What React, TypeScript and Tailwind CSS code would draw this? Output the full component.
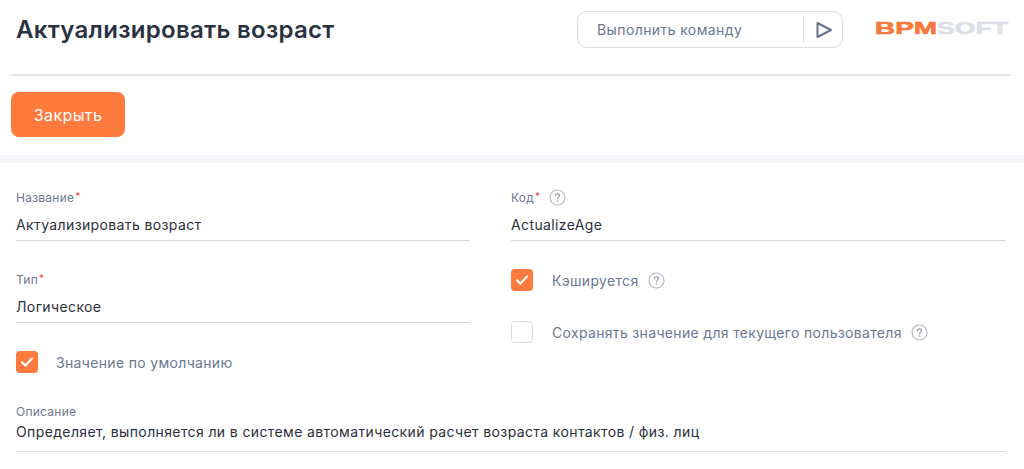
import React from "react";

const HelpIcon = () => (
    <svg width="17" height="17" viewBox="0 0 17 17" fill="none" className="shrink-0">
        <circle cx="8.5" cy="8.5" r="7.5" stroke="#b4b9c4" strokeWidth="1.2" />
        <path
            d="M6.5 6.7c0-1.1.9-1.8 2-1.8s2 .7 2 1.7c0 1.5-2 1.6-2 3.1"
            stroke="#9aa0ad"
            strokeWidth="1.2"
            strokeLinecap="round"
        />
        <circle cx="8.5" cy="12" r=".8" fill="#9aa0ad" />
    </svg>
);

const Checkbox = ({ checked = false }: { checked?: boolean }) =>
    checked ? (
        <span className="flex h-[22px] w-[22px] shrink-0 items-center justify-center rounded-[4px] bg-[#ff7a3d]">
            <svg width="14" height="12" viewBox="0 0 14 12" fill="none">
                <path d="M2 6.2l3.4 3.4L12 2.6" stroke="white" strokeWidth="2.2" strokeLinecap="round" strokeLinejoin="round" />
            </svg>
        </span>
    ) : (
        <span className="h-[22px] w-[22px] shrink-0 rounded-[4px] border border-[#d9dde6] bg-white" />
    );

const Field = ({
    label,
    value,
    required = false,
    help = false,
    className = "",
}: {
    label: string;
    value: string;
    required?: boolean;
    help?: boolean;
    className?: string;
}) => (
    <div className={className}>
        <div className="flex h-[17px] items-center text-[12px] tracking-[0.25px] text-[#6c7790]">
            <span>{label}</span>
            {required && <span className="ml-px self-start text-[10px] leading-[14px] text-[#f0483e]">*</span>}
            {help && (
                <span className="ml-[9px]">
                    <HelpIcon />
                </span>
            )}
        </div>
        <div className="mt-[9px] h-[26px] border-b border-[#d5d8e2] text-[14px] leading-[20px] tracking-[0.38px] text-[#2a2f3a]">
            {value}
        </div>
    </div>
);

const CheckRow = ({
    label,
    checked,
    help = false,
    labelClass,
}: {
    label: string;
    checked?: boolean;
    help?: boolean;
    labelClass: string;
}) => (
    <div className="flex items-center">
        <Checkbox checked={checked} />
        <span className={`text-[14px] tracking-[0.33px] text-[#6c7790] ${labelClass}`}>{label}</span>
        {help && <HelpIcon />}
    </div>
);

export default function App() {
    return (
        <div className="h-[469px] w-[1024px] overflow-hidden bg-white font-['Inter',sans-serif]">
            <div className="mx-[11px] flex h-[76px] w-[1000px] items-start border-b-2 border-[#e4e6ec]">
                <h1 className="ml-[5px] mt-[13px] flex-1 text-[24px] font-semibold leading-[34px] tracking-[0.3px] text-[#2a3242]">
                    Актуализировать возраст
                </h1>
                <div className="mt-[11px] flex h-[37px] w-[266px] items-center rounded-[10px] border border-[#d9dce6] pl-[19px]">
                    <span className="w-[206px] text-[14px] tracking-[0.4px] text-[#6c7790]">Выполнить команду</span>
                    <span className="h-[27px] w-px bg-[#dfe2ea]" />
                    <svg width="18" height="18" viewBox="0 0 18 18" fill="none" className="ml-[11px]">
                        <path d="M2.5 2v14L16 9z" stroke="#67718a" strokeWidth="2" strokeLinejoin="round" />
                    </svg>
                </div>
                <svg width="134" height="20" viewBox="0 0 134 20" className="ml-[32px] mr-[2px] mt-[19px]">
                    <text x="0" y="15" fontFamily="'Liberation Sans',sans-serif" fontWeight="700" fontSize="17" fill="#f5793b" stroke="#f5793b" strokeWidth="0.6" textLength="62" lengthAdjust="spacingAndGlyphs">
                        BPM
                    </text>
                    <text x="62" y="15" fontFamily="'Liberation Sans',sans-serif" fontWeight="700" fontSize="17" fill="#dcdfe6" stroke="#dcdfe6" strokeWidth="0.6" textLength="71" lengthAdjust="spacingAndGlyphs">
                        SOFT
                    </text>
                </svg>
            </div>

            <div className="h-[79px] px-[11px] pt-[16px]">
                <button type="button" className="h-[45px] w-[114px] rounded-[8px] bg-[#ff7a3d] text-[16px] tracking-[0.4px] text-white">
                    Закрыть
                </button>
            </div>

            <div className="h-[8px] bg-[#f4f6fa]" />

            <div className="flex px-[16px] pt-[26px]">
                <div className="w-[454px]">
                    <Field label="Название" value="Актуализировать возраст" required />
                    <Field label="Тип" value="Логическое" required className="mt-[30px]" />
                    <div className="mt-[28px]">
                        <CheckRow label="Значение по умолчанию" checked labelClass="ml-[18px]" />
                    </div>
                </div>
                <div className="ml-[41px] w-[495px]">
                    <Field label="Код" value="ActualizeAge" required help />
                    <div className="mt-[28px]">
                        <CheckRow label="Кэшируется" checked help labelClass="ml-[19px] mr-[9px]" />
                    </div>
                    <div className="mt-[30px]">
                        <CheckRow label="Сохранять значение для текущего пользователя" help labelClass="ml-[19px] mr-[9px]" />
                    </div>
                </div>
            </div>

            <div className="mx-[16px] mt-[30px] w-[990px]">
                <div className="h-[17px] text-[12px] leading-[17px] tracking-[0.25px] text-[#6c7790]">Описание</div>
                <div className="mt-[2px] h-[30px] border-b border-[#d5d8e2] text-[14px] leading-[20px] tracking-[0.38px] text-[#2a2f3a]">
                    Определяет, выполняется ли в системе автоматический расчет возраста контактов / физ. лиц
                </div>
            </div>
        </div>
    );
}
